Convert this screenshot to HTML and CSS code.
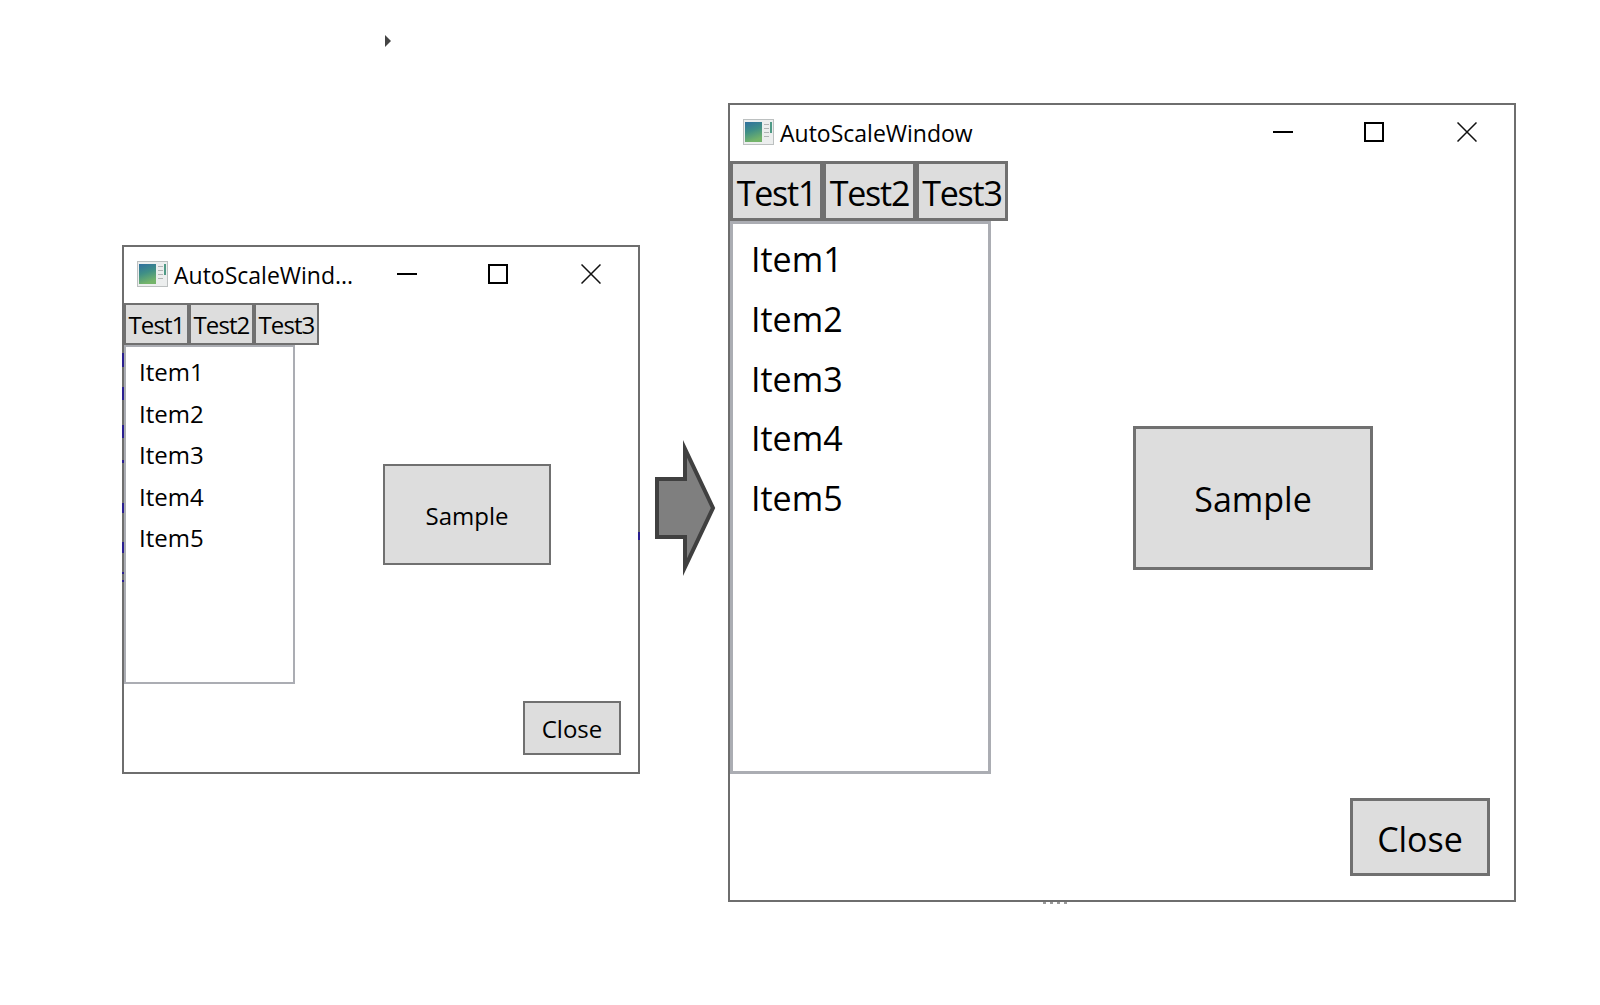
FILE: index.html
```html
<!DOCTYPE html>
<html lang="en">
<head>
    <meta charset="UTF-8">
    <title>AutoScaleWindow</title>
    <link rel="stylesheet" href="styles.css">
</head>
<body>

    <svg class="icon-defs" width="0" height="0">
        <defs>
            <linearGradient id="panelFill" x1="0" y1="0" x2="0.3" y2="1">
                <stop offset="0" stop-color="#2f6f9f"/>
                <stop offset="0.5" stop-color="#3f8f86"/>
                <stop offset="1" stop-color="#74b46a"/>
            </linearGradient>
            <symbol id="appIcon" viewBox="0 0 31 26">
                <rect x="0.5" y="0.5" width="30" height="25" fill="#eceeee" stroke="#bcc0c0"/>
                <rect x="2" y="3" width="17" height="20" fill="url(#panelFill)"/>
                <rect x="21" y="5" width="5" height="1" fill="#b0b4b4"/>
                <rect x="21" y="9" width="5" height="1" fill="#b0b4b4"/>
                <rect x="21" y="13" width="5" height="1" fill="#b0b4b4"/>
                <rect x="21" y="17" width="5" height="1" fill="#b0b4b4"/>
                <rect x="27" y="3" width="2" height="11" fill="#4f9a86"/>
            </symbol>
        </defs>
    </svg>

    <svg class="cursor-mark" width="8" height="12" viewBox="0 0 8 12">
        <path d="M1 0 L7 6 L1 12 Z" fill="#444"/>
    </svg>

    <!-- small window -->
    <div class="win win-small">
        <div class="titlebar">
            <svg class="app-icon"><use href="#appIcon"/></svg>
            <span class="title">AutoScaleWind...</span>
            <div class="caption">
                <svg class="cap-btn" viewBox="0 0 20 20"><path d="M0 10 H20" stroke="#000" stroke-width="2"/></svg>
                <svg class="cap-btn" viewBox="0 0 20 20"><rect x="1" y="1" width="18" height="18" fill="none" stroke="#000" stroke-width="2"/></svg>
                <svg class="cap-btn" viewBox="0 0 20 20"><path d="M0.5 0.5 L19.5 19.5 M19.5 0.5 L0.5 19.5" stroke="#111" stroke-width="1.5"/></svg>
            </div>
        </div>
        <div class="tabs">
            <button class="btn tab">Test1</button>
            <button class="btn tab">Test2</button>
            <button class="btn tab">Test3</button>
        </div>
        <div class="win-body">
            <ul class="list">
                <li>Item1</li>
                <li>Item2</li>
                <li>Item3</li>
                <li>Item4</li>
                <li>Item5</li>
            </ul>
            <div class="win-main">
                <button class="btn sample">Sample</button>
                <button class="btn close">Close</button>
            </div>
        </div>
        <span class="edge-mark"></span>
        <span class="edge-tick"></span>
    </div>

    <svg class="arrow" width="70" height="140" viewBox="0 0 70 140">
        <path d="M4 39 H32 V9 L60 68 L32 127 V97 H4 Z" fill="#7f7f7f" stroke="#404040" stroke-width="4" stroke-miterlimit="10"/>
    </svg>

    <!-- large window -->
    <div class="win win-large">
        <div class="titlebar">
            <svg class="app-icon"><use href="#appIcon"/></svg>
            <span class="title">AutoScaleWindow</span>
            <div class="caption">
                <svg class="cap-btn" viewBox="0 0 20 20"><path d="M0 10 H20" stroke="#000" stroke-width="2"/></svg>
                <svg class="cap-btn" viewBox="0 0 20 20"><rect x="1" y="1" width="18" height="18" fill="none" stroke="#000" stroke-width="2"/></svg>
                <svg class="cap-btn" viewBox="0 0 20 20"><path d="M0.5 0.5 L19.5 19.5 M19.5 0.5 L0.5 19.5" stroke="#111" stroke-width="1.5"/></svg>
            </div>
        </div>
        <div class="tabs">
            <button class="btn tab">Test1</button>
            <button class="btn tab">Test2</button>
            <button class="btn tab">Test3</button>
        </div>
        <div class="win-body">
            <ul class="list">
                <li>Item1</li>
                <li>Item2</li>
                <li>Item3</li>
                <li>Item4</li>
                <li>Item5</li>
            </ul>
            <div class="win-main">
                <button class="btn sample">Sample</button>
                <button class="btn close">Close</button>
            </div>
        </div>
        <span class="bottom-dots"></span>
    </div>

</body>
</html>
```

FILE: styles.css
```css
body {
    font-family: "Open Sans", "Noto Sans", sans-serif;
    margin: 0;
    padding: 0;
    background-color: #fff;
    color: #000;
    height: 1005px;
    overflow: hidden;
}
.icon-defs {
    position: absolute;
}
.cursor-mark {
    position: absolute;
    left: 384px;
    top: 35px;
}
.arrow {
    position: absolute;
    left: 653px;
    top: 440px;
}

/* windows sit on a free canvas */
.win {
    position: absolute;
    box-sizing: border-box;
    border: 2px solid #6e6e6e;
    background-color: #fff;
    display: flex;
    flex-direction: column;
}
.win-small {
    left: 122px;
    top: 245px;
    width: 518px;
    height: 529px;
}
.win-large {
    left: 728px;
    top: 103px;
    width: 788px;
    height: 799px;
}

.titlebar {
    display: flex;
    align-items: center;
    height: 56px;
    flex: none;
}
.app-icon {
    width: 31px;
    height: 26px;
    flex: none;
    margin-left: 13px;
    margin-top: -2px;
}
.title {
    font-size: 23px;
    white-space: nowrap;
    margin-left: 6px;
}
.caption {
    margin-left: auto;
    display: flex;
    gap: 71px;
    margin-right: 37px;
    margin-top: -2px;
}
.cap-btn {
    width: 20px;
    height: 20px;
    display: block;
}
.cap-btn:last-child {
    margin-left: 2px;
}

.btn {
    box-sizing: border-box;
    font-family: inherit;
    color: #000;
    background-color: #ddd;
    border: 2px solid #707070;
    padding: 0;
    display: block;
}
.tabs {
    display: flex;
    flex: none;
}
.tab {
    width: 65px;
    height: 42px;
    font-size: 24px;
    letter-spacing: -0.9px;
}
.win-large .tab {
    width: 93px;
    height: 60px;
    font-size: 34px;
    letter-spacing: -1.2px;
    border-width: 3px;
    padding-top: 4px;
}
.win-large .tab:last-child {
    width: 92px;
}

.win-body {
    display: flex;
    flex: 1;
}
.list {
    box-sizing: border-box;
    margin: 0;
    list-style: none;
    border: 2px solid #abadb3;
    flex: none;
    width: 171px;
    height: 339px;
    padding: 4px 0 0 13px;
    font-size: 24px;
}
.list li {
    height: 41.5px;
    line-height: 41.5px;
}
.win-large .list {
    border-width: 3px;
    width: 261px;
    height: 553px;
    padding: 6px 0 0 18px;
    font-size: 34px;
}
.win-large .list li {
    height: 59.75px;
    line-height: 59.75px;
}

.win-main {
    flex: 1;
    display: flex;
    flex-direction: column;
}
.sample {
    width: 168px;
    height: 101px;
    margin-top: 119px;
    margin-left: 88px;
    font-size: 24px;
    padding-top: 2px;
}
.close {
    width: 98px;
    height: 54px;
    margin-top: 136px;
    margin-right: 17px;
    align-self: flex-end;
    font-size: 24px;
}
.win-large .sample {
    width: 240px;
    height: 144px;
    margin-top: 205px;
    margin-left: 142px;
    font-size: 34px;
    border-width: 3px;
}
.win-large .close {
    width: 140px;
    height: 78px;
    margin-top: 228px;
    margin-right: 24px;
    font-size: 34px;
    border-width: 3px;
    padding-top: 4px;
}

/* clipped specks left around the window edges */
.edge-mark {
    position: absolute;
    left: -2px;
    top: 103px;
    width: 2px;
    height: 235px;
    background: linear-gradient(to bottom,
        transparent 3px, #2a1f8f 3px 17px, transparent 17px 37px,
        #2a1f8f 37px 50px, transparent 50px 75px,
        #2a1f8f 75px 88px, transparent 88px 110px,
        #2a1f8f 110px 113px, transparent 113px 153px,
        #2a1f8f 153px 163px, transparent 163px 192px,
        #2a1f8f 192px 203px, transparent 203px 222px,
        #2a1f8f 222px 224px, transparent 224px 230px,
        #2a1f8f 230px 232px, transparent 232px);
}
.edge-tick {
    position: absolute;
    right: -2px;
    top: 285px;
    width: 2px;
    height: 8px;
    background-color: #2a1f8f;
}
.bottom-dots {
    position: absolute;
    left: 313px;
    bottom: -4px;
    width: 28px;
    height: 2px;
    background: repeating-linear-gradient(to right, #999 0 3px, transparent 3px 7px);
}
```
